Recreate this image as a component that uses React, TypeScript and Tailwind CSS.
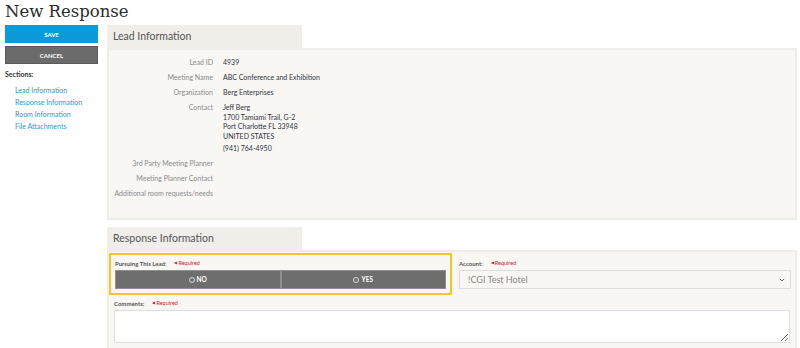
import React from 'react'

const sans = "font-['Lato','Liberation_Sans',sans-serif]"

function Required() {
    return (
        <span className="ml-[8px] inline-flex items-center text-[5.5px] font-normal text-[#c8202a]">
            <span className="mr-[1px] text-[4px]">◀</span>Required
        </span>
    )
}

function Row({ label, children }: { label: string; children?: React.ReactNode }) {
    return (
        <>
            <div className="text-right text-[#8a8a8a]">{label}</div>
            <div className="text-[#2e3340]">{children}</div>
        </>
    )
}

function Tab({ title }: { title: string }) {
    return (
        <div className="w-[195px] h-[23px] bg-[#efeee9] flex items-center pl-[6px] text-[10.5px] text-[#555]">
            {title}
        </div>
    )
}

function Choice({ text }: { text: string }) {
    return (
        <div className="flex items-center justify-center gap-[2px] bg-[#6e6e6e] border border-[#8f8f8f] text-white text-[6.5px] font-bold">
            <span className="w-[6px] h-[6px] rounded-full border border-[#d8d8d8]" />
            {text}
        </div>
    )
}

export default function App() {
    return (
        <div className={`w-[800px] h-[348px] overflow-hidden bg-white ${sans}`}>
            <h1 className="pl-[5px] h-[24px] text-[16.5px] leading-[24px] text-[#2b2b2b] font-['DejaVu_Serif','Liberation_Serif',serif]">
                New Response
            </h1>
            <div className="flex mt-[1px]">
                <div className="ml-[5px] w-[93px] shrink-0">
                    <button className="block w-full h-[18px] bg-[#0c9ad8] text-white text-[6px] font-bold">SAVE</button>
                    <button className="block w-full h-[18px] mt-[3px] bg-[#6b6b6b] border border-[#5a5a5a] text-white text-[6px] font-bold">CANCEL</button>
                    <p className="mt-[5px] text-[7px] leading-[10.5px] font-bold text-[#333]">Sections:</p>
                    <ul className="mt-[4px] pl-[10px] text-[7px] leading-[12px] text-[#1d9cca]">
                        <li>Lead Information</li>
                        <li>Response Information</li>
                        <li>Room Information</li>
                        <li>File Attachments</li>
                    </ul>
                </div>
                <div className="ml-[9px] w-[690px]">
                    <Tab title="Lead Information" />
                    <div className="h-[172px] bg-[#f8f7f4] border-2 border-[#efede8] pt-[8px]">
                        <div className="grid grid-cols-[104px_1fr] gap-x-[10px] gap-y-[5.5px] text-[7px] leading-[9.5px]">
                            <Row label="Lead ID">4939</Row>
                            <Row label="Meeting Name">ABC Conference and Exhibition</Row>
                            <Row label="Organization">Berg Enterprises</Row>
                            <Row label="Contact">
                                <p>Jeff Berg</p>
                                <p>1700 Tamiami Trail, G-2</p>
                                <p>Port Charlotte FL 33948</p>
                                <p>UNITED STATES</p>
                                <p className="mt-[2.5px]">(941) 764-4950</p>
                            </Row>
                            <Row label="3rd Party Meeting Planner" />
                            <Row label="Meeting Planner Contact" />
                            <Row label="Additional room requests/needs" />
                        </div>
                    </div>
                    <div className="mt-[7px]">
                        <Tab title="Response Information" />
                        <div className="h-[120px] bg-[#f8f7f4] border-2 border-[#efede8]">
                            <div className="flex mt-[1px]">
                                <div className="w-[343px] h-[42px] border-2 border-[#f8c523] px-[4px] pt-[4px]">
                                    <div className="h-[8px] flex items-center text-[6px] font-bold text-[#555]">
                                        Pursuing This Lead:<Required />
                                    </div>
                                    <div className="mt-[3px] h-[19px] grid grid-cols-2">
                                        <Choice text="NO" />
                                        <Choice text="YES" />
                                    </div>
                                </div>
                                <div className="flex-1 ml-[7px] mr-[4px] pt-[6px]">
                                    <div className="h-[8px] flex items-center text-[6px] font-bold text-[#555]">
                                        Account:<Required />
                                    </div>
                                    <div className="mt-[3px] h-[19px] border border-[#dcdcdc] bg-[#f8f7f4] flex items-center justify-between pl-[8px] pr-[5px] text-[9px] text-[#888]">
                                        !CGI Test Hotel
                                        <svg width="6" height="4" viewBox="0 0 6 4">
                                            <path d="M0.8 0.8 L3 3 L5.2 0.8" fill="none" stroke="#666" strokeWidth="1" />
                                        </svg>
                                    </div>
                                </div>
                            </div>
                            <div className="px-[5px] pt-[4px]">
                                <div className="h-[8px] flex items-center text-[6px] font-bold text-[#555]">
                                    Comments:<Required />
                                </div>
                                <textarea className="mt-[3px] block w-full h-[33px] bg-white border border-[#dedede] outline-none" />
                            </div>
                        </div>
                    </div>
                </div>
            </div>
        </div>
    )
}
